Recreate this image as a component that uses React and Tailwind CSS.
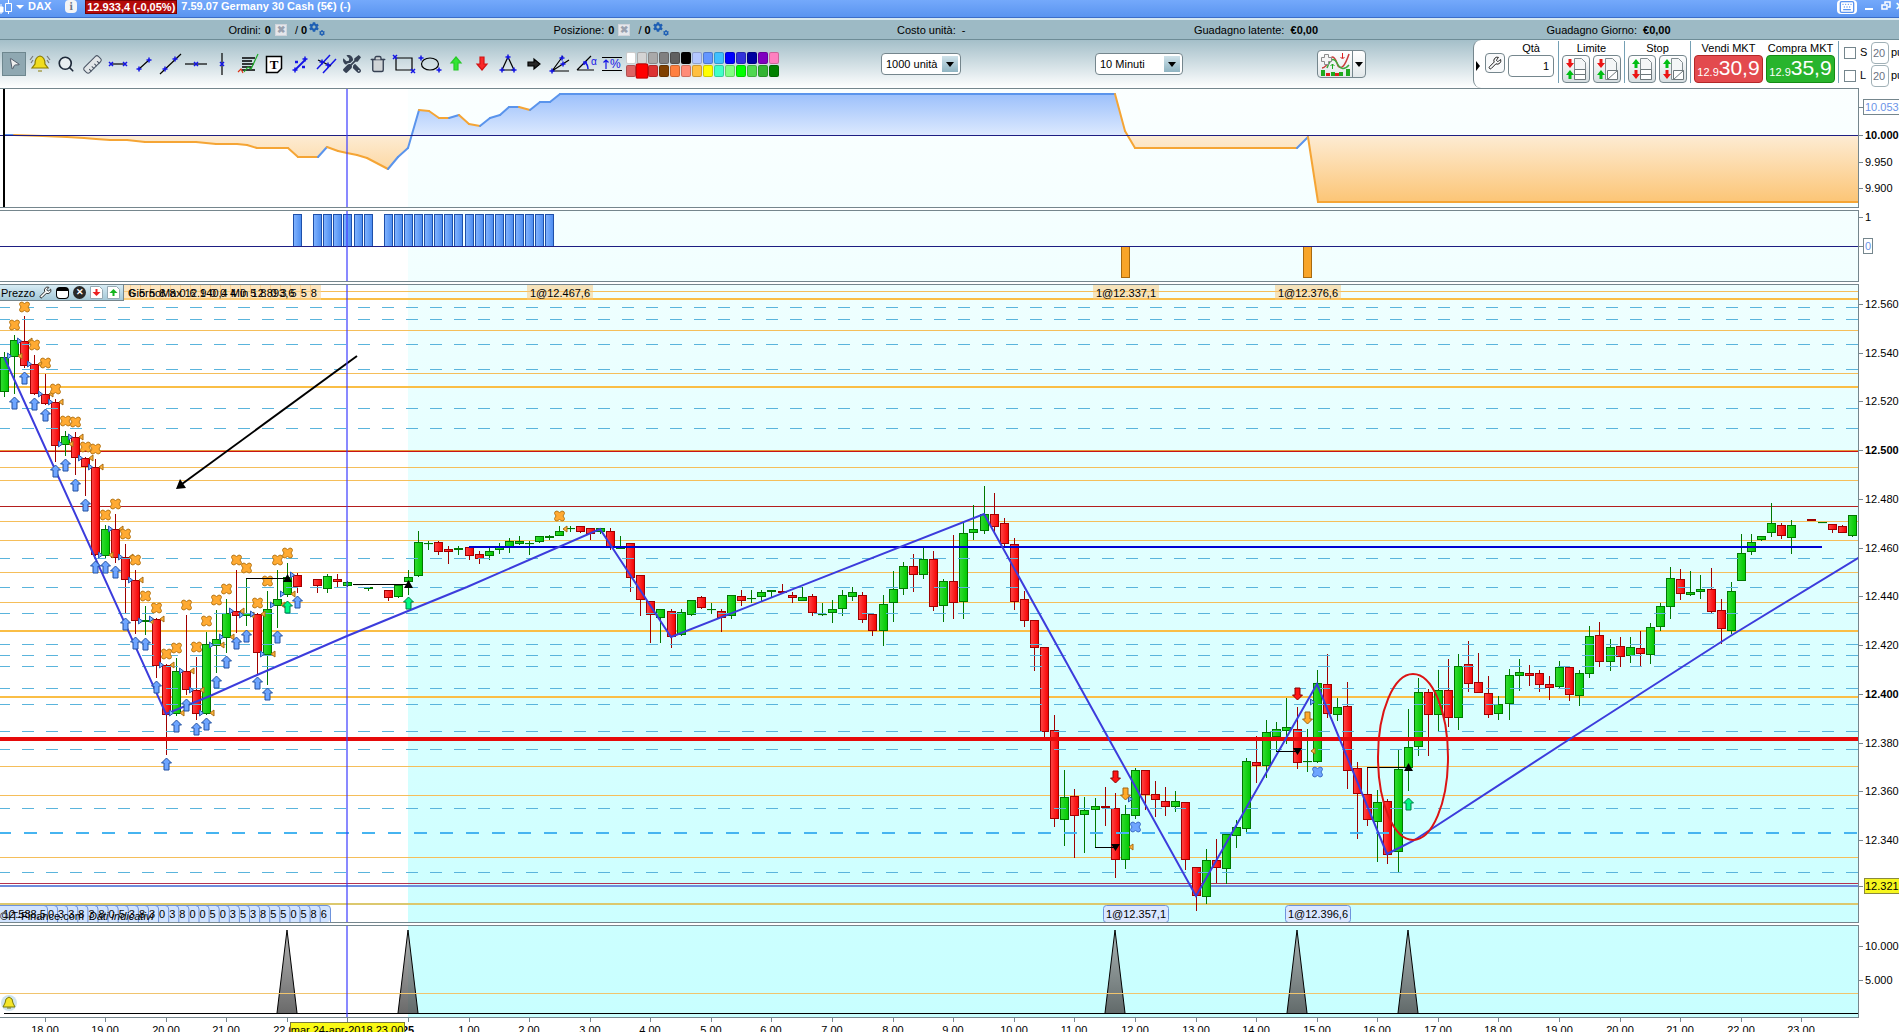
import { useState } from 'react';
import { MousePointer2, Search, Ruler, Trash2, Wrench, Keyboard } from 'lucide-react';
import { FaTools, FaCog } from 'react-icons/fa';

// one candle every 10 minutes, index 0 is midnight
const STEP = 10.097;
const xAt = (i) => Math.round(408 + i * STEP);

// [index, up/down, high, body top, body bottom, low]
const CANDLES = [
  [-40, 'g', 352, 357, 391, 396], [-39, 'g', 335, 340, 356, 393], [-38, 'r', 316, 341, 365, 367],
  [-37, 'r', 355, 364, 393, 394], [-36, 'r', 374, 394, 403, 404], [-35, 'r', 399, 402, 445, 461],
  [-34, 'g', 431, 436, 444, 455], [-33, 'r', 432, 437, 457, 474], [-32, 'r', 457, 458, 466, 495],
  [-31, 'r', 459, 467, 554, 555], [-30, 'g', 525, 529, 555, 557], [-29, 'r', 514, 529, 557, 562],
  [-28, 'r', 544, 557, 579, 613], [-27, 'r', 570, 580, 620, 633], [-26, 'g', 606, 620, 621, 634],
  [-25, 'r', 618, 619, 665, 677], [-24, 'r', 664, 665, 714, 754], [-23, 'g', 658, 671, 713, 715],
  [-22, 'r', 615, 671, 689, 694], [-21, 'r', 657, 690, 713, 719], [-20, 'g', 632, 644, 713, 714],
  [-19, 'g', 610, 639, 645, 672], [-18, 'g', 599, 613, 637, 652], [-17, 'r', 570, 611, 615, 632],
  [-16, 'g', 578, 613, 615, 625], [-15, 'r', 613, 614, 652, 673], [-14, 'g', 591, 609, 654, 684],
  [-13, 'g', 570, 599, 605, 627], [-12, 'g', 563, 577, 594, 596], [-11, 'r', 573, 575, 586, 592],
  [-9, 'r', 579, 579, 585, 592], [-8, 'g', 574, 576, 588, 592], [-7, 'r', 574, 579, 581, 586],
  [-6, 'g', 581, 582, 585, 586], [-5, 'g', 584, 584, 584, 584], [-4, 'g', 587, 587, 588, 590],
  [-2, 'r', 590, 590, 597, 600], [-1, 'g', 584, 585, 596, 597], [0, 'g', 570, 577, 581, 594],
  [1, 'g', 531, 542, 575, 576], [2, 'g', 541, 543, 543, 549], [3, 'r', 541, 542, 551, 554],
  [4, 'r', 546, 549, 551, 563], [5, 'g', 546, 548, 549, 554], [6, 'r', 547, 547, 555, 559],
  [7, 'r', 551, 554, 558, 563], [8, 'g', 548, 551, 555, 559], [9, 'g', 543, 547, 549, 553],
  [10, 'g', 538, 541, 547, 552], [11, 'g', 536, 541, 543, 544], [12, 'g', 541, 543, 543, 554],
  [13, 'g', 536, 536, 541, 542], [14, 'g', 535, 536, 537, 539], [15, 'g', 526, 531, 535, 535],
  [16, 'g', 526, 528, 528, 531], [17, 'r', 526, 526, 531, 532], [18, 'r', 528, 528, 533, 539],
  [19, 'g', 528, 528, 531, 533], [20, 'r', 528, 531, 546, 549], [21, 'g', 536, 547, 548, 548],
  [22, 'r', 543, 543, 577, 591], [23, 'r', 575, 575, 599, 615], [24, 'r', 601, 601, 614, 642],
  [25, 'g', 609, 609, 617, 642], [26, 'r', 609, 611, 636, 647], [27, 'g', 609, 612, 634, 635],
  [28, 'g', 600, 600, 614, 615], [29, 'r', 596, 597, 607, 608], [30, 'g', 603, 609, 609, 613],
  [31, 'r', 609, 611, 617, 631], [32, 'g', 595, 595, 615, 618], [33, 'r', 590, 596, 600, 605],
  [34, 'g', 590, 598, 598, 602], [35, 'g', 590, 592, 596, 601], [36, 'g', 590, 590, 591, 596],
  [37, 'r', 584, 591, 592, 593], [38, 'r', 592, 595, 597, 602], [39, 'g', 587, 597, 600, 600],
  [40, 'r', 594, 596, 612, 615], [41, 'g', 603, 614, 614, 615], [42, 'g', 600, 609, 612, 622],
  [43, 'g', 590, 595, 608, 615], [44, 'g', 587, 592, 596, 600], [45, 'r', 592, 595, 619, 622],
  [46, 'r', 614, 614, 630, 635], [47, 'g', 595, 604, 630, 645], [48, 'g', 571, 589, 602, 621],
  [49, 'g', 562, 566, 588, 594], [50, 'r', 554, 566, 574, 591], [51, 'g', 547, 559, 574, 578],
  [52, 'r', 551, 559, 606, 610], [53, 'g', 579, 581, 605, 621], [54, 'r', 535, 581, 602, 618],
  [55, 'g', 523, 533, 601, 618], [56, 'g', 505, 529, 532, 539], [57, 'g', 486, 514, 530, 533],
  [58, 'r', 493, 514, 526, 531], [59, 'r', 518, 523, 543, 547], [60, 'r', 538, 544, 601, 609],
  [61, 'r', 591, 599, 620, 626], [62, 'r', 620, 620, 647, 670], [63, 'r', 647, 647, 731, 737],
  [64, 'r', 715, 730, 818, 826], [65, 'g', 770, 797, 819, 845], [66, 'r', 789, 796, 815, 857],
  [67, 'g', 797, 810, 814, 852], [68, 'g', 798, 806, 809, 847], [69, 'r', 787, 806, 807, 825],
  [70, 'r', 793, 808, 859, 877], [71, 'g', 805, 814, 859, 868], [72, 'g', 768, 770, 815, 818],
  [73, 'r', 770, 770, 794, 809], [74, 'r', 781, 794, 799, 816], [75, 'r', 787, 801, 806, 815],
  [76, 'g', 791, 801, 806, 811], [77, 'r', 802, 802, 859, 869], [78, 'r', 867, 867, 895, 910],
  [79, 'g', 849, 860, 896, 903], [80, 'r', 839, 860, 867, 882], [81, 'g', 832, 834, 868, 883],
  [82, 'g', 820, 827, 835, 847], [83, 'g', 758, 761, 828, 832], [84, 'r', 736, 762, 765, 782],
  [85, 'g', 720, 732, 765, 777], [86, 'g', 722, 729, 736, 751], [87, 'g', 698, 727, 730, 743],
  [88, 'r', 707, 729, 762, 768], [89, 'g', 729, 761, 761, 771], [90, 'g', 670, 683, 761, 762],
  [91, 'r', 654, 684, 713, 717], [92, 'g', 698, 707, 714, 720], [93, 'r', 682, 706, 770, 788],
  [94, 'r', 762, 768, 793, 838], [95, 'r', 768, 794, 819, 825], [96, 'g', 790, 802, 821, 861],
  [97, 'r', 799, 801, 854, 863], [98, 'g', 750, 769, 851, 871], [99, 'g', 709, 747, 767, 790],
  [100, 'g', 678, 692, 746, 755], [101, 'r', 689, 692, 714, 755], [102, 'g', 670, 690, 714, 731],
  [103, 'r', 659, 690, 717, 726], [104, 'g', 654, 666, 717, 729], [105, 'r', 641, 664, 683, 691],
  [106, 'r', 653, 682, 692, 692], [107, 'r', 676, 693, 714, 717], [108, 'g', 696, 704, 713, 719],
  [109, 'g', 669, 675, 703, 719], [110, 'g', 659, 672, 675, 690], [111, 'r', 665, 673, 675, 685],
  [112, 'r', 670, 673, 684, 691], [113, 'r', 676, 684, 687, 699], [114, 'g', 661, 667, 686, 688],
  [115, 'r', 667, 667, 694, 700], [116, 'g', 670, 673, 695, 705], [117, 'g', 626, 636, 673, 677],
  [118, 'r', 622, 635, 661, 666], [119, 'g', 639, 647, 661, 670], [120, 'r', 637, 646, 656, 666],
  [121, 'g', 637, 647, 655, 662], [122, 'r', 631, 648, 653, 665], [123, 'g', 623, 627, 654, 663],
  [124, 'g', 603, 606, 626, 630], [125, 'g', 567, 578, 606, 618], [126, 'r', 569, 579, 593, 599],
  [127, 'g', 571, 592, 594, 595], [128, 'g', 575, 589, 591, 598], [129, 'r', 568, 589, 611, 612],
  [130, 'r', 599, 610, 628, 643], [131, 'g', 582, 591, 630, 633], [132, 'g', 534, 553, 580, 580],
  [133, 'g', 534, 542, 551, 554], [134, 'g', 536, 536, 539, 540], [135, 'g', 503, 523, 532, 536],
  [136, 'r', 523, 525, 535, 538], [137, 'g', 520, 525, 537, 553], [139, 'r', 519, 519, 520, 520],
  [140, 'g', 522, 522, 522, 522], [141, 'r', 524, 524, 529, 532], [142, 'r', 525, 526, 532, 532],
  [143, 'g', 515, 515, 535, 536],
];

const BLUE_UP = [
  [-39, 403], [-38, 378], [-37, 404], [-36, 415], [-35, 471], [-34, 465], [-33, 485], [-32, 505],
  [-31, 567], [-30, 567], [-29, 572], [-28, 624], [-27, 643], [-26, 644], [-25, 687], [-24, 764],
  [-23, 726], [-22, 705], [-21, 729], [-20, 724], [-19, 682], [-18, 662], [-17, 643], [-16, 636],
  [-15, 683], [-14, 694], [-13, 637], [-11, 602],
];
const GREEN_UP = [[-12, 607], [0, 603], [99, 804]];
const RED_DOWN = [[70, 777], [88, 694]];
const ORANGE_DOWN = [[71, 794], [89, 718]];
const ORANGE_X = [
  [-39, 325], [-38, 307], [-37, 345], [-36, 363], [-35, 389], [-34, 421], [-33, 422], [-32, 447],
  [-31, 449], [-30, 515], [-29, 504], [-28, 534], [-27, 560], [-26, 596], [-25, 608], [-24, 654],
  [-23, 648], [-22, 605], [-21, 647], [-20, 621], [-19, 600], [-18, 589], [-17, 560], [-16, 568],
  [-15, 603], [-14, 581], [-13, 560], [-12, 553], [15, 516],
];
const BLUE_X = [[72, 827], [90, 772]];

const ORANGE_THIN = [291, 330, 373, 467, 480, 521, 540, 572, 602, 766, 795, 857];
const ORANGE_THICK = [299, 387, 631, 697];
const DASHED = [307, 319, 344, 369, 408, 428, 558, 587, 613, 644, 655, 666, 688, 704, 731, 749, 808, 872];

const EQUITY = [
  [4, 135], [14, 135], [43, 136], [67, 137], [84, 138], [96, 139], [110, 140], [127, 140], [145, 142],
  [196, 142], [216, 144], [237, 144], [247, 145], [257, 148], [288, 148], [298, 157], [318, 157],
  [327, 147], [338, 151], [347, 153], [357, 155], [367, 158], [388, 169], [398, 157], [408, 148],
  [419, 110], [429, 111], [439, 118], [449, 118], [459, 115], [469, 124], [480, 126], [490, 118],
  [500, 115], [509, 107], [519, 107], [530, 110], [540, 102], [550, 102], [560, 94], [1115, 94],
  [1125, 131], [1135, 148], [1297, 148], [1308, 137], [1318, 202], [4000, 202],
];

const POSITION_BARS = [-11, -9, -8, -7, -6, -5, -4];
for (let i = -2; i <= 14; i++) POSITION_BARS.push(i);

const TOP_DIGITS = '6558806100405803558'.split('');
const BOTTOM_DIGITS = '0338380538303800503538550586'.split('');

const PALETTE = [
  ['#ffffff', '#d4d4d4', '#a9a9a9', '#808080', '#606060', '#000000', '#b4c8ff', '#6496ff', '#40c0ff', '#0000ff', '#3232dc', '#0000a0', '#8000c0', '#ff80c0'],
  ['#dc6464', '#ff0000', '#dc3232', '#804000', '#ff8040', '#ff8c78', '#ffc040', '#ffff00', '#40ffc8', '#80ff80', '#00ff00', '#50d850', '#32b432', '#008000'],
];

const Panel = ({ top, height, shade, children }) => (
  <svg className="block w-full border-r border-y border-[#75868d] bg-white" height={height}>
    <defs>
      <linearGradient id={`shade${top}`} x1="0" y1="0" x2="0" y2="1">
        <stop offset="0" stopColor={shade[0]} />
        <stop offset="1" stopColor={shade[1]} />
      </linearGradient>
    </defs>
    <g transform={`translate(0 ${-top - 1})`} fontFamily="Liberation Sans, Arial, sans-serif" fontSize="11">
      <rect x="408" y={top} width="100%" height={height} fill={`url(#shade${top})`} />
      {children}
      <line x1="347" x2="347" y1={top} y2={top + height} stroke="#3c3cff" strokeWidth="2" opacity="0.6" />
    </g>
  </svg>
);

// labels: [y, text, style]
const Axis = ({ top, height, labels }) => (
  <svg className="block w-10 shrink-0 bg-white" height={height}>
    <g transform={`translate(0 ${-top})`} fontFamily="Liberation Sans, Arial, sans-serif" fontSize="11">
      {labels.map(([y, text, kind]) => (
        <g key={text + y}>
          <line x1="0" x2="4" y1={y + 0.5} y2={y + 0.5} stroke="#75868d" />
          {kind === 'yellow' && <rect x="5.5" y={y - 7.5} width="50" height="15" fill="#f6f61e" stroke="#8a8a3c" />}
          {kind === 'box' && <rect x="4.5" y={y - 7.5} width={text.length > 1 ? 50 : 9} height="15" fill="#fff" stroke="#75868d" />}
          <text x="6" y={y + 4} fontWeight={kind === 'bold' ? 700 : 400} fill={kind === 'box' ? '#6b93e8' : '#000'}>{text}</text>
        </g>
      ))}
    </g>
  </svg>
);

const Arrow = ({ x, y, down, fill, stroke }) => (
  <path
    d="M0 -6 L5 -1 H2.5 V6 H-2.5 V-1 H-5 Z"
    transform={`translate(${x + 0.5} ${y})${down ? ' rotate(180)' : ''}`}
    fill={fill}
    stroke={stroke}
  />
);

const CrossMark = ({ x, y, fill, stroke }) => (
  <path
    d="M-2.5 -5 L0 -3.5 L2.5 -5 Q5 -5 5 -2.5 L3.5 0 L5 2.5 Q5 5 2.5 5 L0 3.5 L-2.5 5 Q-5 5 -5 2.5 L-3.5 0 L-5 -2.5 Q-5 -5 -2.5 -5 Z"
    transform={`translate(${x + 0.5} ${y})`}
    fill={fill}
    stroke={stroke}
  />
);

const Candle = ({ data: [i, dir, high, top, bottom, low] }) => {
  const x = xAt(i);
  const line = dir === 'g' ? '#007800' : '#a00000';
  return (
    <g stroke={line}>
      <line x1={x + 0.5} x2={x + 0.5} y1={high} y2={low + 1} />
      <rect x={x - 3.5} y={top + 0.5} width="8" height={Math.max(bottom - top, 0.1)} fill={dir === 'g' ? 'url(#up)' : 'url(#down)'} />
    </g>
  );
};

const OpenMark = ({ x, y, side }) =>
  side === 'left' ? (
    <path d={`M${x - 6.5} ${y - 3} l4 3 l-4 3 z`} fill="#7db4ff" stroke="#2a5ab4" />
  ) : (
    <path d={`M${x + 8} ${y - 3} l-4 3 l4 3 z`} fill="#ffb43c" stroke="#a86a10" />
  );

const OrderLabel = ({ i, text, bottom }) => (
  <g>
    {bottom ? (
      <rect x={xAt(i) - 31.5} y="905.5" width="65" height="17" rx="3" fill="#dbe8ff" stroke="#6e93dc" />
    ) : (
      <rect x={xAt(i) - 32} y="285" width="66" height="15" fill="#fcc878" opacity="0.5" />
    )}
    <text x={xAt(i) + 1} y={bottom ? 918 : 297} textAnchor="middle">{text}</text>
  </g>
);

const EquityPanel = () => {
  const points = EQUITY.map((p) => p.join(',')).join(' ');
  const area = `4,135 ${points} 4000,135`;
  return (
    <Panel top={88} height={120} shade={['#fbffff', '#f5ffff']}>
      <defs>
        <linearGradient id="gain" gradientUnits="userSpaceOnUse" x1="0" y1="94" x2="0" y2="135">
          <stop offset="0" stopColor="#9cc0fb" />
          <stop offset="1" stopColor="#dce9fe" />
        </linearGradient>
        <linearGradient id="loss" gradientUnits="userSpaceOnUse" x1="0" y1="135" x2="0" y2="202">
          <stop offset="0" stopColor="#fdecd4" />
          <stop offset="1" stopColor="#fcc576" />
        </linearGradient>
        <clipPath id="above"><rect x="0" y="88" width="4000" height="47" /></clipPath>
        <clipPath id="below"><rect x="0" y="135" width="4000" height="73" /></clipPath>
      </defs>
      <polygon points={area} fill="url(#gain)" clipPath="url(#above)" />
      <polygon points={area} fill="url(#loss)" clipPath="url(#below)" />
      {EQUITY.slice(1).map(([x, y], n) => {
        const [px, py] = EQUITY[n];
        // flat stretches keep the colour of the move before them
        const rising = y < py || (y === py && (y < 110 || n === 0));
        return <line key={n} x1={px} y1={py} x2={x} y2={y} stroke={rising ? '#5a94ec' : '#f5a535'} strokeWidth="2" strokeLinecap="round" />;
      })}
      <line x1="0" x2="100%" y1="135.5" y2="135.5" stroke="#1e1e82" />
      <line x1="4" x2="4" y1="88" y2="208" stroke="#000" strokeWidth="2" />
    </Panel>
  );
};

const PositionPanel = () => (
  <Panel top={210} height={72} shade={['#f5ffff', '#f1ffff']}>
    <defs>
      <linearGradient id="bar">
        <stop offset="0" stopColor="#82b4ff" />
        <stop offset="1" stopColor="#4b8cf0" />
      </linearGradient>
    </defs>
    {POSITION_BARS.map((i) => (
      <rect key={i} x={xAt(i) - 3.5} y="214.5" width="8" height="32" fill="url(#bar)" stroke="#1e50aa" />
    ))}
    {[71, 89].map((i) => (
      <rect key={i} x={xAt(i) - 3.5} y="246.5" width="8" height="31" fill="#f8a529" stroke="#a86a10" />
    ))}
    <line x1="0" x2="100%" y1="246.5" y2="246.5" stroke="#1e1e82" />
  </Panel>
);

const PricePanel = () => (
  <Panel top={284} height={639} shade={['#efffff', '#ccffff']}>
    <defs>
      <linearGradient id="up">
        <stop offset="0" stopColor="#32dc32" />
        <stop offset="1" stopColor="#00c800" />
      </linearGradient>
      <linearGradient id="down">
        <stop offset="0" stopColor="#ff4646" />
        <stop offset="1" stopColor="#f50000" />
      </linearGradient>
    </defs>
    {ORANGE_THIN.map((y) => (
      <line key={y} x1="0" x2="100%" y1={y + 0.5} y2={y + 0.5} stroke="#f5be5a" />
    ))}
    {ORANGE_THICK.map((y) => (
      <line key={y} x1="0" x2="100%" y1={y} y2={y} stroke="#fabe46" strokeWidth="2" />
    ))}
    <line x1="0" x2="100%" y1="904" y2="904" stroke="#dcc86e" strokeWidth="2" />
    <line x1="0" x2="100%" y1="450.5" y2="450.5" stroke="#e6963c" />
    <line x1="0" x2="100%" y1="451.5" y2="451.5" stroke="#c81414" />
    <line x1="0" x2="100%" y1="506.5" y2="506.5" stroke="#b41e1e" />
    <line x1="0" x2="100%" y1="883.5" y2="883.5" stroke="#b43250" />
    <line x1="0" x2="100%" y1="886" y2="886" stroke="#6e8cdc" strokeWidth="2" />

    {CANDLES.map((c) => <Candle key={c[0]} data={c} />)}

    {DASHED.map((y) => (
      <line key={y} x1="-2" x2="100%" y1={y + 0.5} y2={y + 0.5} stroke="#5ab4dc" strokeDasharray="12 12" />
    ))}
    <line x1="-2" x2="100%" y1="833" y2="833" stroke="#46b4f0" strokeWidth="2" strokeDasharray="13 13" />
    <line x1="0" x2="100%" y1="739" y2="739" stroke="#e60a0a" strokeWidth="4" />
    <line x1="469" x2="1822" y1="547" y2="547" stroke="#0000d2" strokeWidth="2" />

    <polyline
      points="4,357 166,714 210,696 257,675 347,636 408,611 467,587 600,529 671,637 984,514 1196,896 1317,684 1387,854 1413,841 1573,737 1732,635 1858,558 2400,227"
      fill="none"
      stroke="#3c3cdc"
      strokeWidth="2"
    />

    {CANDLES.filter(([i]) => i > -40 && i < -10).map(([i, dir, , top, bottom]) => (
      <g key={i}>
        <OpenMark x={xAt(i)} y={dir === 'g' ? bottom : top} side="left" />
        {i < -11 && <OpenMark x={xAt(i)} y={dir === 'g' ? bottom : top} side="right" />}
      </g>
    ))}
    <OpenMark x={xAt(15)} y={529} side="right" />
    <OpenMark x={xAt(72)} y={799} side="left" />
    <OpenMark x={xAt(71)} y={847} side="right" />
    <OpenMark x={xAt(90)} y={702} side="left" />
    <OpenMark x={xAt(89)} y={751} side="right" />

    {BLUE_UP.map(([i, y]) => <Arrow key={i} x={xAt(i)} y={y} fill="#6ea5ff" stroke="#2350a0" />)}
    {GREEN_UP.map(([i, y]) => <Arrow key={i} x={xAt(i)} y={y} fill="#00fa82" stroke="#007d46" />)}
    {RED_DOWN.map(([i, y]) => <Arrow key={i} x={xAt(i)} y={y} down fill="#ff1414" stroke="#8c0000" />)}
    {ORANGE_DOWN.map(([i, y]) => <Arrow key={i} x={xAt(i)} y={y} down fill="#ffaa28" stroke="#a06414" />)}
    {ORANGE_X.map(([i, y]) => <CrossMark key={i} x={xAt(i)} y={y} fill="#ffaa32" stroke="#b87818" />)}
    {BLUE_X.map(([i, y]) => <CrossMark key={i} x={xAt(i)} y={y} fill="#6ea5ff" stroke="#3c6ec8" />)}

    <g stroke="#000" fill="none">
      <path d="M246 578.5 H288" />
      <path d="M353 584.5 H408" />
      <path d="M1095 847.5 H1115" />
      <path d="M1276 751.5 H1297" />
      <path d="M1367 767.5 H1408" />
    </g>
    <path d="M287.5 574 l4.500 8 h-9 z M408.500 580 l4.500 8 h-9 z M1408.500 763 l4.500 8 h-9 z" />
    <path d="M1115.500 851 l4.500 -7 h-9 z M1297.500 755 l4.500 -7 h-9 z" />
    <path d="M357 356 L182 484" stroke="#000" strokeWidth="2" />
    <path d="M176 489 l10 -1 l-6 -9 z" />
    <ellipse cx="1413" cy="757" rx="35" ry="83" fill="none" stroke="#dc1414" strokeWidth="2" />

    <rect x="123" y="285" width="198" height="15" fill="#fcd696" opacity="0.6" />
    {TOP_DIGITS.map((d, n) => (
      <g key={n}>
        <line x1={130.5 + n * 10} x2={130.5 + n * 10} y1="285" y2="300" stroke="#fac878" opacity="0.6" />
        <text x={129 + n * 10.1} y="297">{d}</text>
      </g>
    ))}
    <text x="128" y="297">GiornoMax 12.940,4 Min 12.893,6</text>
    <OrderLabel i={15} text="1@12.467,6" />
    <OrderLabel i={71} text="1@12.337,1" />
    <OrderLabel i={89} text="1@12.376,6" />

    <rect x="-4" y="905" width="334" height="17" rx="3" fill="#d2e4ff" />
    <text x="3" y="918">12.588,5</text>
    {BOTTOM_DIGITS.map((d, n) => (
      <g key={n}>
        <path d={`M${44 + n * 10.1} 905.500 q3.500 0 3.500 3.500 V922`} fill="none" stroke="#6e93dc" />
        <text x={48 + n * 10.1} y="918">{d}</text>
      </g>
    ))}
    <path d="M0 905.500 H327 q3.500 0 3.500 3.500 V922" fill="none" stroke="#6e93dc" />
    <text x="0" y="920">©IT-Finance.com</text>
    <text x="89" y="920" fontStyle="italic">Dati indicativi</text>
    <OrderLabel i={72} text="1@12.357,1" bottom />
    <OrderLabel i={90} text="1@12.396,6" bottom />
  </Panel>
);

const SignalPanel = () => (
  <Panel top={925} height={93} shade={['#ccffff', '#c8ffff']}>
    <defs>
      <linearGradient id="spike" x1="0" y1="0" x2="0" y2="1">
        <stop offset="0" stopColor="#a0a0a0" stopOpacity="0.8" />
        <stop offset="1" stopColor="#505050" stopOpacity="0.85" />
      </linearGradient>
    </defs>
    {[-12, 0, 70, 88, 99].map((i) => (
      <path key={i} d={`M${xAt(i) - 10} 1013 L${xAt(i)} 930 L${xAt(i) + 10} 1013`} fill="url(#spike)" stroke="#000" />
    ))}
    <line x1="0" x2="100%" y1="993.5" y2="993.5" stroke="#f0c46e" />
    <line x1="4" x2="100%" y1="1013.5" y2="1013.5" stroke="#000" />
    <circle cx="9" cy="1003" r="8" fill="#cfe3ec" />
    <path d="M9 997 q-4 1 -4 6 l-2 4 h12 l-2 -4 q0 -5 -4 -6 z M7 1008 h4" fill="#f5e628" stroke="#78780a" />
  </Panel>
);

const TimeAxis = () => {
  const ticks = [];
  for (let i = -36; i <= 138; i += 6) ticks.push(i);
  return (
    <svg className="block w-full shrink-0 bg-white" height="18">
      <g fontFamily="Liberation Sans, Arial, sans-serif" fontSize="11" textAnchor="middle">
        {ticks.map((i) => (
          <g key={i}>
            <line x1={xAt(i) + 0.5} x2={xAt(i) + 0.5} y1="0" y2="4" stroke="#75868d" />
            <text x={xAt(i)} y="16" fontWeight={i === 0 ? 700 : 400}>
              {i === 0 ? '25' : `${(i / 6 + 24) % 24}.00`}
            </text>
          </g>
        ))}
        <rect x="290.5" y="4.5" width="114" height="16" fill="#fafa14" stroke="#78783c" />
        <text x="347" y="16">mar 24-apr-2018 23.00</text>
      </g>
    </svg>
  );
};

const AXES = {
  equity: [[107, '10.053', 'box'], [135, '10.000', 'bold'], [162, '9.950'], [188, '9.900']],
  position: [[217, '1'], [246, '0', 'box']],
  price: [
    [304, '12.560'], [353, '12.540'], [401, '12.520'], [450, '12.500', 'bold'], [499, '12.480'],
    [548, '12.460'], [596, '12.440'], [645, '12.420'], [694, '12.400', 'bold'], [743, '12.380'],
    [791, '12.360'], [840, '12.340'], [886, '12.321', 'yellow'],
  ],
  signal: [[946, '10.000'], [980, '5.000']],
};

// small handles that sit on the ends of drawing tools
const H = ({ x, y }) => <path d={`M${x - 2} ${y - 2} l4 4 m0 -4 l-4 4`} stroke="#1414e6" strokeWidth="1.5" />;
const P = ({ x, y }) => <path d={`M${x - 2.5} ${y} h5 M${x} ${y - 2.5} v5`} stroke="#1414e6" strokeWidth="1.5" />;

const Icon = ({ children }) => (
  <svg width="24" height="24" viewBox="0 0 24 24" fill="none" stroke="#000" strokeWidth="1.2">{children}</svg>
);

const TOOLS = [
  ['Seleziona', <MousePointer2 size={14} fill="#f0f0f0" strokeWidth={1.5} className="rotate-12 text-gray-600" />],
  ['Allarme', <Icon><path d="M12 4 q-5 1 -5 8 l-3 4 h16 l-3 -4 q0 -7 -5 -8 z M10 19 h4" fill="#f0dc1e" stroke="#8c7d00" /><path d="M5 4 l-3 4 m3 0 l-2 3 M19 4 l3 4 m-3 0 l2 3" stroke="#787878" /></Icon>],
  ['Zoom', <Search size={18} strokeWidth={2.2} fill="#e8eef0" className="text-gray-800" />],
  ['Righello', <Ruler size={21} strokeWidth={1.2} fill="#e2e6e8" className="rotate-90 text-gray-600" />],
  ['Segmento orizzontale', <Icon><path d="M5 12 h14" /><H x={5} y={12} /><H x={19} y={12} /></Icon>],
  ['Segmento', <Icon><path d="M7 17 L17 8" /><P x={7} y={17} /><P x={17} y={8} /></Icon>],
  ['Retta', <Icon><path d="M2 22 L23 2" /><P x={7} y={17} /><P x={17} y={7} /></Icon>],
  ['Linea orizzontale', <Icon><path d="M1 12 h22" /><H x={12} y={12} /></Icon>],
  ['Linea verticale', <Icon><path d="M12 1 v22" /><H x={12} y={12} /></Icon>],
  ['Commento', <Icon><path d="M6 6 h13 M6 9 h10 M6 12 h12 M6 15 h10 M6 18 h13" strokeWidth="1.5" /><path d="M2 20 l3 -3 2 4" stroke="#dc3214" /><path d="M8 20 l4 -5 3 2 L22 2" stroke="#1eaa28" /></Icon>],
  ['Testo', <Icon><path d="M4.500 4.500 h15 v12 l-4 4 h-11 z" fill="#fff" strokeWidth="1.5" /><text x="12" y="17" textAnchor="middle" stroke="none" fill="#000" fontFamily="Liberation Serif, serif" fontWeight="700" fontSize="13">T</text></Icon>],
  ['Regressione', <Icon><path d="M7 18 L18 7" stroke="#1414e6" strokeWidth="1.800" /><path d="M7 10 h3 M14 15 h3" stroke="#1414e6" strokeWidth="2.500" /><P x={7} y={18} /><P x={17} y={7} /></Icon>],
  ['Canale', <Icon><path d="M3 17 L16 3 M9 21 L22 7" stroke="#1414e6" strokeWidth="1.5" /><path d="M4 8 L17 14" /><P x={8} y={10} /><P x={14} y={13} /></Icon>],
  ['Impostazioni', <FaTools size={18} className="-scale-x-100 text-gray-700" />],
  ['Elimina', <Trash2 size={18} strokeWidth={1.8} fill="#d0d4d6" className="text-gray-700" />],
  ['Rettangolo', <Icon><path d="M4 6 h16 v12 h-16 z" /><H x={3} y={5} /><H x={21} y={19} /></Icon>],
  ['Ellisse', <Icon><ellipse cx="12" cy="12" rx="8.500" ry="6" /><P x={3} y={6} /><P x={21} y={18} /></Icon>],
  ['Freccia su', <Icon><path d="M12 5 l5 6 h-3 v7 h-4 v-7 h-3 z" fill="#32e632" stroke="#28c828" /></Icon>],
  ['Freccia giù', <Icon><path d="M12 18 l5 -6 h-3 v-7 h-4 v7 h-3 z" fill="#fa2828" stroke="#d21414" /></Icon>],
  ['Triangolo', <Icon><path d="M12 5 L18 18 H6 z" /><P x={12} y={5} /><P x={6} y={18} /><P x={18} y={18} /></Icon>],
  ['Freccia destra', <Icon><path d="M6 10 h6 v-3 l6 5 -6 5 v-3 h-6 z" fill="#282828" stroke="#000" /></Icon>],
  ['Ventaglio', <Icon><path d="M4 19 L15 4 M4 19 L21 8 M4 19 H21" /><P x={4} y={19} /><P x={14} y={6} /><P x={15} y={12} /></Icon>],
  ['Angolo', <Icon><path d="M3 18 L17 4 M3 18 H20" /><path d="M10 10 q4 2 4 7 M10 13 v-3 h3" stroke="#1414e6" strokeWidth="1.5" /><text x="17" y="13" stroke="none" fill="#1414e6" fontSize="10" fontFamily="Liberation Sans, sans-serif">α</text></Icon>],
  ['Variazione percentuale', <Icon><path d="M2 5.500 h20 M2 18.500 h20" /><path d="M6 17 V8 m-2.500 2.500 L6 8 l2.500 2.500" stroke="#1414e6" /><text x="10" y="16" stroke="none" fill="#1414e6" fontSize="12" fontFamily="Liberation Sans, sans-serif">%</text></Icon>],
];

const CloseOrders = () => (
  <button type="button" aria-label="Annulla ordini" className="ml-1 flex size-3 items-center justify-center border border-gray-300 bg-gray-200 text-[10px] font-bold leading-none text-gray-400">✖</button>
);

const Gears = () => (
  <button type="button" aria-label="Dettagli" className="ml-0.5 flex h-4 w-4 items-start text-[#1e5fb4]">
    <FaCog size={10} className="shrink-0" />
    <FaCog size={6} className="mt-2 shrink-0" />
  </button>
);

const InfoBar = () => (
  <div className="flex h-[22px] shrink-0 items-center justify-evenly border-b border-t-2 border-b-[#6e8c96] border-t-[#d8e8f0] bg-[#9dbac5] leading-4">
    {['Ordini:', 'Posizione:'].map((label) => (
      <div key={label} className="flex items-center">
        <span>{label}</span>
        <b className="ml-1">0</b>
        <CloseOrders />
        <span className="ml-2">/ <b>0</b></span>
        <Gears />
      </div>
    ))}
    <div>Costo unità: &nbsp;-</div>
    <div>Guadagno latente: &nbsp;<b>€0,00</b></div>
    <div>Guadagno Giorno: &nbsp;<b>€0,00</b></div>
  </div>
);

const TitleBar = () => (
  <header className="flex h-[18px] shrink-0 items-start border-b border-[#3c6ec8] bg-linear-to-b from-[#74a9fb] to-[#5a94f0] font-bold leading-[13px] text-white">
    <svg width="14" height="14" stroke="#fff" fill="none">
      <path d="M1 4 v10 M0 7 h3 v5 h-3" fill="#fff" />
      <path d="M8.500 0 v3 M8.500 11 v3 M5.500 3.500 h6 v8 h-6 z" />
    </svg>
    <svg width="8" height="14" className="ml-0.5"><path d="M0 5 h8 l-4 4 z" fill="#fff" /></svg>
    <h1 className="ml-1">DAX</h1>
    <button type="button" aria-label="Informazioni" className="ml-3.5 h-[13px] w-3 rounded-sm bg-gray-100 font-serif leading-3 text-gray-500">i</button>
    <span className="ml-2 h-[14px] border border-[#780000] bg-[#b40a0a] px-px">12.933,4 (-0,05%)</span>
    <span className="ml-1">7.59.07 Germany 30 Cash (5€) (-)</span>
    <div className="ml-auto flex items-start gap-1">
      <button type="button" aria-label="Tastiera" className="flex h-[14px] w-5 items-center justify-center rounded-sm bg-white text-[#5a94f0]">
        <Keyboard size={16} strokeWidth={2} />
      </button>
      <button type="button" aria-label="Riduci" className="ml-1 mt-2 h-0.5 w-2 bg-white" />
      <button type="button" aria-label="Ripristina" className="ml-1">
        <svg width="10" height="12" fill="none" stroke="#fff" strokeWidth="1.5"><path d="M1 5 h5 v4 h-5 z M4 4 v-2 h5 v5 h-2" /></svg>
      </button>
      <button type="button" aria-label="Chiudi" className="w-1 overflow-hidden">✕</button>
    </div>
  </header>
);

const Dropdown = ({ label, value, onChange, options, className }) => (
  <div className={`relative h-[22px] rounded-sm border border-[#75868d] bg-white ${className}`}>
    <select aria-label={label} value={value} onChange={onChange} className="h-full w-full appearance-none pl-1 outline-none">
      {options.map((o) => <option key={o}>{o}</option>)}
    </select>
    <span className="pointer-events-none absolute inset-y-0.5 right-0.5 flex w-4 items-center justify-center bg-linear-to-b from-[#cfe2ea] to-[#8fb4c2]">
      <svg width="8" height="5"><path d="M0 0 h8 l-4 5 z" /></svg>
    </span>
  </div>
);

const OrderIcon = ({ stop, slash }) => {
  const up = <path d="M4 0 l4 5 h-2.500 v4 h-3 v-4 h-2.500 z" fill="#00be14" />;
  const down = <path d="M4 9 l4 -5 h-2.500 v-4 h-3 v4 h-2.500 z" fill="#eb1414" />;
  return (
    <svg width="24" height="24" fill="none" stroke="none">
      <path d="M10.500 1.500 h7 l4 4 v17 h-11 z" stroke="#828c90" fill="#f4f6f7" />
      {slash ? (
        <path d="M12.500 13.500 h10 v9 h-10 z m0 9 l10 -9" stroke="#6e787c" fill="#fff" />
      ) : (
        <path d="M10.500 12.500 h11 v5 h-11 z m0 5 h11 v5 h-11 z" stroke="#6e787c" fill="#fff" />
      )}
      <g transform="translate(2 2)">{stop ? up : down}</g>
      <g transform="translate(2 13)">{stop ? down : up}</g>
    </svg>
  );
};

const smallButton = 'flex h-7 w-7 items-center justify-center rounded-sm border border-[#75868d] bg-linear-to-b from-white to-[#d6dee1]';

const OrderPair = ({ title, stop }) => (
  <div className="border-l border-[#75a0b4] px-[3px] text-center">
    <div className="leading-[14px]">{title}</div>
    <div className="flex gap-[3px]">
      <button type="button" aria-label={title} className={smallButton}><OrderIcon stop={stop} /></button>
      <button type="button" aria-label={`${title} obliquo`} className={smallButton}><OrderIcon stop={stop} slash /></button>
    </div>
  </div>
);

const MarketButton = ({ label, small, large, className }) => (
  <div className="flex flex-col items-center">
    <span className="leading-[14px]">{label}</span>
    <button type="button" aria-label={label} className={`flex h-7 w-[69px] items-end justify-center rounded-sm border text-white ${className}`}>
      <span className="leading-5">{small}</span>
      <span className="text-[21px] leading-7">{large}</span>
    </button>
  </div>
);

const TradingPanel = () => {
  const [qty, setQty] = useState('1');
  return (
    <div className="flex h-full items-start overflow-hidden rounded-l-lg border-l border-[#75868d] bg-white pt-px">
      <svg width="8" height="10" className="mt-5"><path d="M2 0 v10 l4 -5 z" /></svg>
      <button type="button" aria-label="Opzioni" className="mt-3 ml-[3px] flex h-5 w-5 items-center justify-center rounded-sm border border-[#75868d] bg-gray-50">
        <Wrench size={14} strokeWidth={1.5} />
      </button>
      <label className="mr-1 ml-[3px] flex w-[46px] flex-col items-center leading-[14px]">
        Qtà
        <input value={qty} onChange={(e) => setQty(e.target.value)} className="h-[22px] w-full rounded-sm border border-[#75868d] px-1 text-right outline-none" />
      </label>
      <OrderPair title="Limite" />
      <OrderPair title="Stop" stop />
      <div className="flex gap-[3px] border-l border-r border-[#75a0b4] px-[3px]">
        <MarketButton label="Vendi MKT" small="12.9" large="30,9" className="border-[#b42828] bg-[#e34a4e]" />
        <MarketButton label="Compra MKT" small="12.9" large="35,9" className="border-[#148c14] bg-[#28b42d]" />
      </div>
      <div className="w-[60px] shrink-0 overflow-hidden pl-[5px]">
        {['S', 'L'].map((side) => (
          <div key={side} className="flex h-[23px] w-20 items-center">
            <label className="flex w-6 items-center gap-1">
              <input type="checkbox" className="size-3 appearance-none border border-[#75868d] bg-white" />
              {side}
            </label>
            <input aria-label={`${side} punti`} defaultValue="20" className="ml-[3px] h-[22px] w-[18px] rounded-sm border border-[#a0b0b6] px-px text-gray-500 outline-none" />
            <span className="ml-0.5">punti</span>
          </div>
        ))}
      </div>
    </div>
  );
};

const Toolbar = () => {
  const [tool, setTool] = useState('Seleziona');
  const [color, setColor] = useState('#ff0000');
  const [units, setUnits] = useState('1000 unità');
  const [frame, setFrame] = useState('10 Minuti');
  return (
    <div className="flex h-12 shrink-0 items-center bg-linear-to-b from-[#a4bfc9] to-white">
      <div className="flex gap-0.5 pl-0.5">
        {TOOLS.map(([name, icon]) => (
          <button
            key={name}
            type="button"
            aria-label={name}
            onClick={() => setTool(name)}
            className={`flex h-6 w-6 items-center justify-center ${tool === name ? 'border border-[#6e878f] bg-[#8fa8b2]' : ''}`}
          >
            {icon}
          </button>
        ))}
      </div>
      <div className="ml-0.5 flex flex-col gap-px">
        {PALETTE.map((row, n) => (
          <div key={n} className="flex gap-px">
            {row.map((c) => (
              <button
                key={c}
                type="button"
                aria-label={c}
                onClick={() => setColor(c)}
                className={`h-3 w-2.5 rounded-xs border border-black/20 ${color === c ? 'scale-130' : ''}`}
                style={{ backgroundColor: c }}
              />
            ))}
          </div>
        ))}
      </div>
      <div className="flex grow items-center justify-between pr-[107px] pl-[102px]">
        <Dropdown label="Unità" value={units} onChange={(e) => setUnits(e.target.value)} options={['1000 unità', '2000 unità']} className="w-20" />
        <Dropdown label="Intervallo" value={frame} onChange={(e) => setFrame(e.target.value)} options={['5 Minuti', '10 Minuti', '1 Ora']} className="w-[88px]" />
        <div className="flex h-7 rounded-sm border border-[#75868d] bg-linear-to-b from-white to-[#e2e8ea]">
          <button type="button" aria-label="Aggiungi indicatore" className="w-[35px] border-r border-[#75868d] pl-0.5">
            <svg width="30" height="24" fill="none">
              <path d="M2 16 q4 0 8 -9 q4 -6 8 7 q5 6 11 -12" stroke="#c83c3c" strokeWidth="1.5" />
              <path d="M7 16 q5 -14 10 -5 q5 10 12 2" stroke="#3caa3c" strokeWidth="1.5" />
              <path d="M1 18 h4 v6 h-4 z M11 20 h4 v4 h-4 z M19 20 h4 v4 h-4 z M26 17 h4 v7 h-4 z" fill="#1eaa1e" />
              <path d="M6 21 h4 v3 h-4 z M15 21 h4 v3 h-4 z" fill="#dc1e1e" />
              <path d="M4.500 2.500 h4 v3 h3 v4 h-3 v3 h-4 v-3 h-3 v-4 h3 z" fill="#f5f5f5" stroke="#8c8c8c" />
              <path d="M22.500 1 v5 m-2 -1 l2 2 2 -2" stroke="#dc1e1e" />
              <path d="M12.500 17 v-5 m-2 2 l2 -2 2 2" stroke="#1eaa1e" />
            </svg>
          </button>
          <button type="button" aria-label="Altri indicatori" className="flex w-3 items-center justify-center">
            <svg width="8" height="5"><path d="M0 0 h8 l-4 5 z" /></svg>
          </button>
        </div>
      </div>
      <TradingPanel />
    </div>
  );
};

const PriceTab = () => (
  <div className="absolute left-0 top-px flex h-4 w-[124px] items-center border-r border-b border-[#75868d] bg-linear-to-b from-[#d8ecf4] to-[#a4c8d8] pl-px">
    <span className="w-[34px] leading-4">Prezzo</span>
    <button type="button" aria-label="Impostazioni prezzo" className="ml-1"><Wrench size={13} strokeWidth={1.5} fill="#fff" /></button>
    <button type="button" aria-label="Finestra" className="ml-1 h-3 w-[13px] rounded-sm border border-t-4 border-black bg-white" />
    <button type="button" aria-label="Chiudi" className="ml-1 flex size-[13px] items-center justify-center rounded-full bg-[#282828] text-[9px] font-bold leading-none text-white">✕</button>
    {['#eb1e1e', '#14b41e'].map((c, n) => (
      <button key={c} type="button" aria-label={n ? 'Sposta su' : 'Sposta giù'} className="ml-1">
        <svg width="13" height="13">
          <path d="M0.500 0.500 h9 l3 3 v9 h-12 z" fill="#fff" stroke="#96aab4" />
          <path d={n ? 'M6.500 3 l4 4 h-3 v3 h-2 v-3 h-3 z' : 'M6.500 10 l4 -4 h-3 v-3 h-2 v3 h-3 z'} fill={c} />
        </svg>
      </button>
    ))}
  </div>
);

const ROWS = [
  { name: 'equity', top: 88, height: 120, Chart: EquityPanel },
  { name: 'position', top: 210, height: 72, Chart: PositionPanel },
  { name: 'price', top: 284, height: 639, Chart: PricePanel },
  { name: 'signal', top: 925, height: 93, Chart: SignalPanel },
];

const App = () => (
  <div className="flex h-screen flex-col overflow-hidden bg-white font-['Liberation_Sans',Arial,sans-serif] text-[11px] text-black">
    <TitleBar />
    <InfoBar />
    <Toolbar />
    <main className="flex shrink-0 flex-col gap-0.5">
      {ROWS.map(({ name, top, height, Chart }) => (
        <section key={name} className="relative flex">
          <div className="min-w-0 grow"><Chart /></div>
          <Axis top={top} height={height} labels={AXES[name]} />
          {name === 'price' && <PriceTab />}
        </section>
      ))}
    </main>
    <TimeAxis />
  </div>
);

export default App;
